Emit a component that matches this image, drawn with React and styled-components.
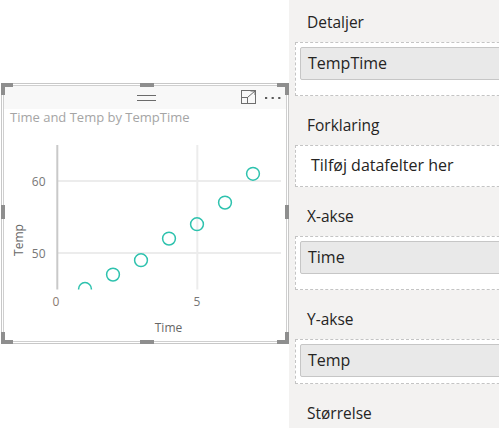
import React from 'react';
import styled, { createGlobalStyle } from 'styled-components';

const GlobalStyle = createGlobalStyle`
  html, body {
    margin: 0;
    padding: 0;
    background: #ffffff;
  }
  body {
    font-family: "Segoe UI", "Open Sans", "Noto Sans", sans-serif;
  }
`;

const Page = styled.div`
  display: flex;
  width: 499px;
  height: 428px;
  overflow: hidden;
`;

const Canvas = styled.div`
  width: 289px;
  flex: none;
  background: #ffffff;
  padding-top: 83px;
  box-sizing: border-box;
`;

const VisualFrame = styled.div`
  position: relative;
  margin-left: 1px;
  width: 288px;
  height: 261px;
  box-sizing: border-box;
  border: 1px solid #c8c8c8;
  padding: 1px;
`;

const VisualInner = styled.div`
  height: 100%;
  box-sizing: border-box;
  border: 1px solid #cfcfcf;
  display: flex;
  flex-direction: column;
  background: #ffffff;
`;

const Handle = styled.div`
  position: absolute;
  background: #8e8e8e;
  width: ${p => p.$w}px;
  height: ${p => p.$h}px;
  ${p => p.$pos}
`;

const VisualHeader = styled.div`
  height: 23px;
  flex: none;
  background: #f8f8f8;
  display: grid;
  grid-template-columns: 1fr auto 1fr;
  align-items: center;
`;

const Grip = styled.div`
  width: 19px;
  height: 4px;
  border-top: 1px solid #6b6b6b;
  border-bottom: 1px solid #6b6b6b;
  margin-left: 3px;
`;

const HeaderTools = styled.div`
  justify-self: end;
  display: flex;
  align-items: center;
  gap: 8px;
  padding-right: 3px;
`;

const Title = styled.div`
  height: 16px;
  flex: none;
  padding-left: 6px;
  font-family: "Open Sans", sans-serif;
  font-size: 13px;
  line-height: 16px;
  color: #a5a5a5;
  white-space: nowrap;
`;

const ChartSvg = styled.svg`
  display: block;
  flex: none;
  font-family: "Open Sans", sans-serif;
`;

const FieldsPane = styled.div`
  width: 210px;
  flex: none;
  background: #f3f2f1;
  overflow: hidden;
  padding-top: 11px;
  box-sizing: border-box;
  display: flex;
  flex-direction: column;
`;

const WellLabel = styled.div`
  height: 22px;
  line-height: 22px;
  padding-left: 18px;
  margin-bottom: 9px;
  font-family: "Open Sans", sans-serif;
  font-size: 15.5px;
  color: #252423;
  white-space: nowrap;
`;

const Well = styled.div`
  margin-left: 6px;
  margin-bottom: 18px;
  width: 230px;
  flex: none;
  box-sizing: border-box;
  border: 1px dashed #c4c4c4;
  background: #ffffff;
  padding: 4px 0 ${p => p.$padBottom ?? 5}px 4px;
`;

const FieldPill = styled.div`
  height: 33px;
  box-sizing: border-box;
  border: 1px solid #c6c6c6;
  border-radius: 2px;
  background: #e9e9e9;
  padding-left: 7px;
  font-family: "Open Sans", sans-serif;
  font-size: 16px;
  line-height: 31px;
  color: #252423;
  white-space: nowrap;
`;

const Placeholder = styled.div`
  height: 31px;
  padding-left: 11px;
  font-family: "Open Sans", sans-serif;
  font-size: 16px;
  line-height: 31px;
  color: #252423;
  white-space: nowrap;
`;

const FocusIcon = () => (
  <svg width="16" height="15" viewBox="0 0 16 15">
    <rect x="0.5" y="0.5" width="14" height="13" fill="none" stroke="#6e6e6e" />
    <rect x="0.5" y="7.5" width="6" height="6" fill="none" stroke="#6e6e6e" />
    <path d="M7 7 L14 1 M9.5 1 H14 V5" fill="none" stroke="#6e6e6e" />
  </svg>
);

const MoreIcon = () => (
  <svg width="18" height="4" viewBox="0 0 18 4">
    <rect x="0" y="1" width="2.2" height="2" fill="#5a5a5a" />
    <rect x="6.6" y="1" width="2.2" height="2" fill="#5a5a5a" />
    <rect x="13.2" y="1" width="2.2" height="2" fill="#5a5a5a" />
  </svg>
);

const points = [45, 47, 49, 52, 54, 57, 61];
const xPos = v => 53 + v * 28;
const yPos = v => 56 + (60 - v) * 7.2;

const ScatterChart = () => (
  <ChartSvg width="282" height="215" viewBox="0 0 282 215">
    <defs>
      <clipPath id="plot">
        <rect x="40" y="0" width="242" height="164.5" />
      </clipPath>
    </defs>
    <line x1="53" y1="56" x2="277" y2="56" stroke="#ececec" strokeWidth="2" />
    <line x1="53" y1="128" x2="277" y2="128" stroke="#ececec" strokeWidth="2" />
    <line x1="193.3" y1="20" x2="193.3" y2="164.5" stroke="#ececec" strokeWidth="2" />
    <line x1="53.3" y1="20" x2="53.3" y2="164.5" stroke="#c9c9c9" strokeWidth="2" />
    <text x="41.5" y="60.5" textAnchor="end" fontSize="12" fill="#777">60</text>
    <text x="41.5" y="132.5" textAnchor="end" fontSize="12" fill="#777">50</text>
    <text x="52" y="180.5" textAnchor="middle" fontSize="12" fill="#8a7a70">0</text>
    <text x="193" y="180.5" textAnchor="middle" fontSize="12" fill="#777">5</text>
    <text x="164.5" y="206.5" textAnchor="middle" fontSize="12" fill="#666">Time</text>
    <text x="0" y="0" textAnchor="middle" fontSize="12" fill="#666" transform="translate(18.5 115) rotate(-90)">Temp</text>
    <g clipPath="url(#plot)">
      {points.map((v, i) => (
        <circle key={i} cx={xPos(i + 1)} cy={yPos(v)} r="6.4" fill="none" stroke="#2ec2ae" strokeWidth="1.5" />
      ))}
    </g>
  </ChartSvg>
);

const handles = [
  { w: 12, h: 4, pos: 'left: -1px; top: -1px;' },
  { w: 4, h: 12, pos: 'left: -1px; top: -1px;' },
  { w: 12, h: 4, pos: 'right: -1px; top: -1px;' },
  { w: 4, h: 12, pos: 'right: -1px; top: -1px;' },
  { w: 12, h: 4, pos: 'left: -1px; bottom: -1px;' },
  { w: 4, h: 12, pos: 'left: -1px; bottom: -1px;' },
  { w: 12, h: 4, pos: 'right: -1px; bottom: -1px;' },
  { w: 4, h: 12, pos: 'right: -1px; bottom: -1px;' },
  { w: 14, h: 4, pos: 'left: 138px; top: -1px;' },
  { w: 14, h: 4, pos: 'left: 138px; bottom: -1px;' },
  { w: 4, h: 14, pos: 'left: -1px; top: 121px;' },
  { w: 4, h: 14, pos: 'right: -1px; top: 121px;' },
];

const App = () => (
  <>
    <GlobalStyle />
    <Page>
      <Canvas>
        <VisualFrame>
          <VisualInner>
            <VisualHeader>
              <span />
              <Grip />
              <HeaderTools>
                <FocusIcon />
                <MoreIcon />
              </HeaderTools>
            </VisualHeader>
            <Title>Time and Temp by TempTime</Title>
            <ScatterChart />
          </VisualInner>
          {handles.map((h, i) => (
            <Handle key={i} $w={h.w} $h={h.h} $pos={h.pos} />
          ))}
        </VisualFrame>
      </Canvas>
      <FieldsPane>
        <WellLabel>Detaljer</WellLabel>
        <Well $padBottom={15}>
          <FieldPill>TempTime</FieldPill>
        </Well>
        <WellLabel>Forklaring</WellLabel>
        <Well $padBottom={5}>
          <Placeholder>Tilføj datafelter her</Placeholder>
        </Well>
        <WellLabel>X-akse</WellLabel>
        <Well $padBottom={15}>
          <FieldPill>Time</FieldPill>
        </Well>
        <WellLabel>Y-akse</WellLabel>
        <Well $padBottom={6}>
          <FieldPill>Temp</FieldPill>
        </Well>
        <WellLabel>Størrelse</WellLabel>
      </FieldsPane>
    </Page>
  </>
);

export default App;
